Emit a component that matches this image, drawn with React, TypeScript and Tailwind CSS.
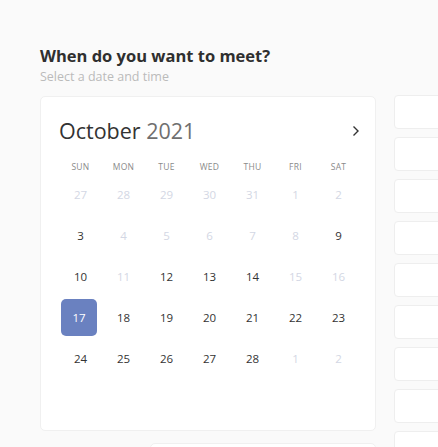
import React from "react";

type Day = { n: number; t: "dim" | "on" | "sel" };

const rows: Day[][] = [
  [27, 28, 29, 30, 31, 1, 2].map((n) => ({ n, t: "dim" as const })),
  [
    { n: 3, t: "on" },
    { n: 4, t: "dim" },
    { n: 5, t: "dim" },
    { n: 6, t: "dim" },
    { n: 7, t: "dim" },
    { n: 8, t: "dim" },
    { n: 9, t: "on" },
  ],
  [
    { n: 10, t: "on" },
    { n: 11, t: "dim" },
    { n: 12, t: "on" },
    { n: 13, t: "on" },
    { n: 14, t: "on" },
    { n: 15, t: "dim" },
    { n: 16, t: "dim" },
  ],
  [
    { n: 17, t: "sel" },
    { n: 18, t: "on" },
    { n: 19, t: "on" },
    { n: 20, t: "on" },
    { n: 21, t: "on" },
    { n: 22, t: "on" },
    { n: 23, t: "on" },
  ],
  [
    { n: 24, t: "on" },
    { n: 25, t: "on" },
    { n: 26, t: "on" },
    { n: 27, t: "on" },
    { n: 28, t: "on" },
    { n: 1, t: "dim" },
    { n: 2, t: "dim" },
  ],
];

const heads = ["SUN", "MON", "TUE", "WED", "THU", "FRI", "SAT"];

export default function App() {
  return (
    <div
      className="w-[438px] h-[447px] overflow-hidden bg-[#fafafa] pl-[40px] pt-[45px]"
      style={{ fontFamily: '"Open Sans", "Noto Sans", sans-serif' }}
    >
      <div className="flex flex-row">
        <div className="w-[336px] shrink-0 flex flex-col">
          <h1 className="text-[16.5px] leading-[22px] font-bold text-[#2f2f2f]">
            When do you want to meet?
          </h1>
          <p className="mt-[2px] text-[12.5px] leading-[16px] text-[#bbbbbb]">Select a date and time</p>
          <div className="mt-[11px] bg-white rounded-[5px] border border-[#f0f0f0] pl-[18px] pr-[15px] pt-[19px] pb-[51px]">
            <div className="h-[30px] flex items-center justify-between">
              <div className="text-[21.5px] leading-[30px] text-[#333]">
                October <span className="text-[#6f6f6f]">2021</span>
              </div>
              <svg width="8" height="12" viewBox="0 0 8 12" className="mr-0">
                <path d="M1.5 1.5 L6 6 L1.5 10.5" fill="none" stroke="#333" strokeWidth="1.4" />
              </svg>
            </div>
            <div className="mt-[14px] grid grid-cols-7 w-[301px] h-[14px]">
              {heads.map((h) => (
                <div key={h} className="flex items-center justify-center text-[8.5px] text-[#8a8a8a] tracking-[0.3px]">
                  {h}
                </div>
              ))}
            </div>
            <div className="w-[301px]">
              {rows.map((r, i) => (
                <div key={i} className="grid grid-cols-7 h-[41px]">
                  {r.map((d, j) => (
                    <div key={j} className="flex items-center justify-center">
                      {d.t === "sel" ? (
                        <div className="-ml-[3px] w-[36px] h-[37px] rounded-[5px] bg-[#6a81c0] text-white text-[11.5px] flex items-center justify-center">
                          {d.n}
                        </div>
                      ) : (
                        <span
                          className={
                            "text-[11.5px] " + (d.t === "on" ? "text-[#333]" : "text-[#d3d7e4]")
                          }
                        >
                          {d.n}
                        </span>
                      )}
                    </div>
                  ))}
                </div>
              ))}
            </div>
          </div>
          <div className="mt-[12px] ml-[110px] h-[30px] bg-white rounded-[5px] border border-[#f0f0f0]" />
        </div>
        <div className="ml-[18px] mt-[50px] flex flex-col gap-[8px]">
          {Array.from({ length: 9 }).map((_, i) => (
            <div key={i} className="w-[120px] h-[34px] bg-white rounded-[4px] border border-[#eeeeee]" />
          ))}
        </div>
      </div>
    </div>
  );
}
